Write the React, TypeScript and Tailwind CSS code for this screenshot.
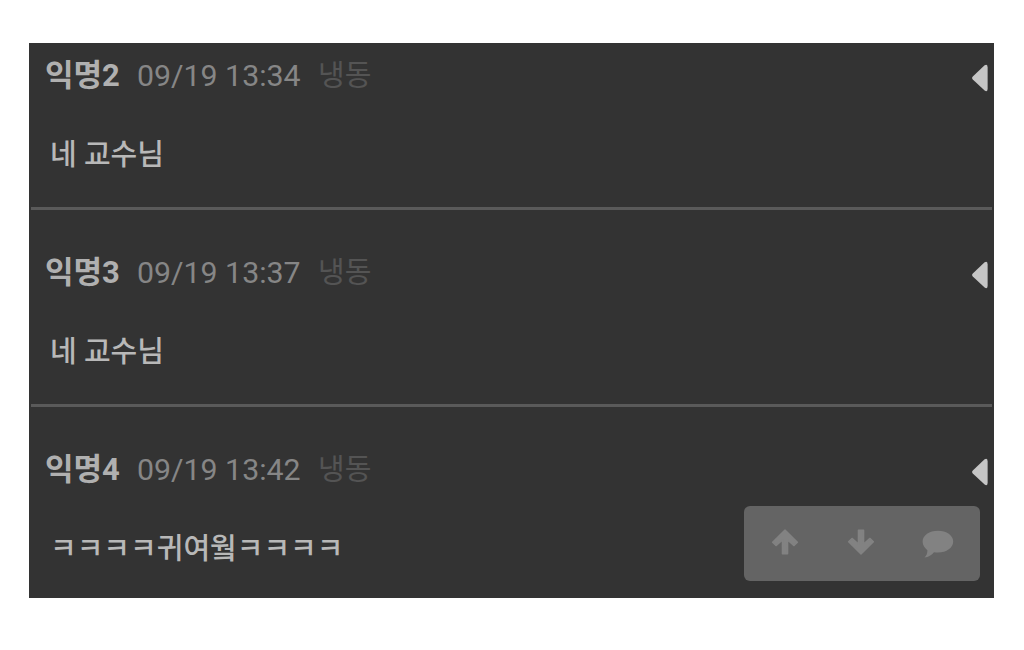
type Comment = {
  name: string;
  time: string;
  tag: string;
  text: string;
};

const comments: Comment[] = [
  { name: "익명2", time: "09/19 13:34", tag: "냉동", text: "네 교수님" },
  { name: "익명3", time: "09/19 13:37", tag: "냉동", text: "네 교수님" },
  { name: "익명4", time: "09/19 13:42", tag: "냉동", text: "ㅋㅋㅋㅋ귀여웤ㅋㅋㅋㅋ" },
];

function Marker() {
  return (
    <svg viewBox="0 0 16 28" className="mt-[9px] h-7 w-4 fill-[#c6c6c6]">
      <path d="M0.8 12.6 12.6 1.2Q15.4-.4 15.6 3V25Q15.4 28.4 12.6 26.6L.8 15.4Q-.6 14 .8 12.6Z" />
    </svg>
  );
}

function ArrowIcon({ className = "" }: { className?: string }) {
  return (
    <svg
      viewBox="0 0 28 28"
      className={`size-7 fill-[#828282] stroke-[#828282] ${className}`}
      strokeWidth="1.4"
      strokeLinejoin="round"
    >
      <path d="M14 2 26.4 14.2 23 17.6 16.6 12V25.8H11.4V12L5 17.6 1.6 14.2Z" />
    </svg>
  );
}

function CommentIcon() {
  return (
    <svg viewBox="0 0 32 28" className="mt-[3px] h-7 w-8 fill-[#828282]">
      <path d="M16 .8C24.6.8 31.2 5.4 31.2 11.6S24.6 22.6 16 22.6C14.6 22.6 13.2 22.5 12 22.2 9.6 25 6.6 27 2.6 27.6 4.4 25.6 5.4 23.4 5.4 20.2 2.4 18 .6 15 .6 11.6.6 5.4 7.4.8 16 .8Z" />
    </svg>
  );
}

function CommentItem({ name, time, tag, text }: Comment) {
  return (
    <li className="flex h-[197px] shrink-0 justify-between border-b-[3px] border-[#5a5a5a] pt-[42px] pr-1 pl-3.5 last:border-b-0">
      <div>
        <div className="flex h-[42px] items-baseline leading-[42px] whitespace-pre">
          <span className="w-[92px] text-[31px] font-bold text-[#b0b0b0]">{name}</span>
          <span className="w-[181px] text-[30.3px] text-[#868686]">{time}</span>
          <span className="text-[29px] text-[#545454]">{tag}</span>
        </div>
        <p className="mt-[37px] pl-[5px] text-[29px] leading-[42px] font-medium text-[#b8b8b8]">{text}</p>
      </div>
      <Marker />
    </li>
  );
}

export default function App() {
  return (
    <main className="h-[650px] w-[1024px] overflow-hidden bg-white pt-[43px] pl-[29px] font-['Roboto','Noto_Sans_CJK_KR',sans-serif]">
      <div className="relative h-[555px] w-[965px] overflow-hidden bg-[#333333] px-0.5">
        <ul className="-mt-[30px] flex flex-col">
          {comments.map((comment) => (
            <CommentItem key={comment.name} {...comment} />
          ))}
        </ul>
        <div className="absolute right-[14px] bottom-[17px] flex h-[75px] w-[236px] items-center justify-between rounded-md bg-[#646464] pr-[26px] pb-[3px] pl-[27px]">
          <ArrowIcon />
          <ArrowIcon className="rotate-180" />
          <CommentIcon />
        </div>
      </div>
    </main>
  );
}
